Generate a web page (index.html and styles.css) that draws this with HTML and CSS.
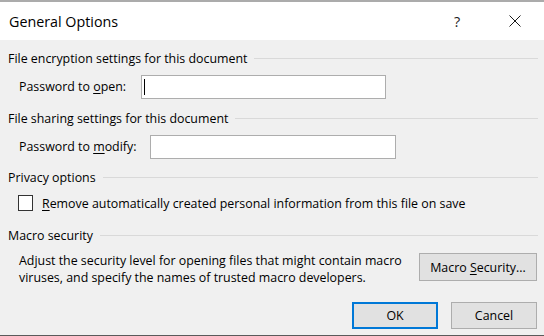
FILE: index.html
```html
<!DOCTYPE html>
<html>
<head>
<meta charset="utf-8">
<link rel="stylesheet" href="styles.css">
</head>
<body>
<div class="dialog">
  <div class="titlebar">
    <div class="title">General Options</div>
    <div class="help">?</div>
    <div class="close">
      <svg width="12" height="12" viewBox="0 0 12 12"><path d="M0.5 0.5 L11.5 11.5 M11.5 0.5 L0.5 11.5" stroke="#1a1a1a" stroke-width="1" fill="none"/></svg>
    </div>
  </div>
  <div class="content">
    <div class="group-head g1"><span>File encryption settings for this document</span></div>
    <div class="field-row r1">
      <label class="label w-open">Password to <u>o</u>pen:</label>
      <div class="input focused"><span class="caret"></span></div>
    </div>
    <div class="group-head g2"><span>File sharing settings for this document</span></div>
    <div class="field-row r2">
      <label class="label w-modify">Password to <u>m</u>odify:</label>
      <div class="input"></div>
    </div>
    <div class="group-head g3"><span>Privacy options</span></div>
    <div class="check-row">
      <span class="checkbox"></span>
      <span class="check-label"><u>R</u>emove automatically created personal information from this file on save</span>
    </div>
    <div class="group-head g4"><span>Macro security</span></div>
    <div class="macro-row">
      <div class="desc">Adjust the security level for opening files that might contain macro<br>viruses, and specify the names of trusted macro developers.</div>
      <button class="btn macro-btn">Macro <u>S</u>ecurity...</button>
    </div>
    <div class="footer">
      <button class="btn ok">OK</button>
      <button class="btn cancel">Cancel</button>
    </div>
  </div>
</div>
</body>
</html>
```
FILE: styles.css
```css
html, body {
  margin: 0;
  padding: 0;
}
body {
  width: 544px;
  height: 336px;
  overflow: hidden;
  background: #f0f0f0;
  font-family: "Open Sans", "Noto Sans", sans-serif;
  font-size: 12.4px;
  color: #000;
}
.dialog {
  width: 544px;
  height: 336px;
  box-sizing: border-box;
  border-bottom: 1px solid #5a5a5a;
  display: flex;
  flex-direction: column;
}
.titlebar {
  height: 38px;
  border-top: 2px solid #ababab;
  background: #fff;
  display: flex;
  align-items: center;
}
.title {
  padding-left: 9px;
  font-size: 14.3px;
  flex: 1;
  color: #000;
}
.help {
  font-size: 14.3px;
  width: 8px;
  margin-right: 47px;
  color: #1a1a1a;
}
.close {
  width: 12px;
  height: 12px;
  margin-right: 23px;
  display: flex;
}
.content {
  padding: 11px 6px 0 8px;
  display: flex;
  flex-direction: column;
}
.group-head {
  display: flex;
  align-items: center;
  height: 16px;
  line-height: 16px;
}
.group-head::after {
  content: "";
  flex: 1;
  height: 1px;
  background: #d9d9d9;
  margin-left: 7px;
  margin-top: -2px;
}
.g2 { margin-top: 12px; }
.g3 { margin-top: 11px; }
.g4 { margin-top: 17px; }
.field-row {
  display: flex;
  align-items: center;
  margin-top: 8px;
  padding-left: 11px;
  height: 24px;
}
.label {
  line-height: 16px;
}
.w-open { width: 122px; }
.w-modify { width: 131px; }
.input {
  width: 243px;
  height: 22px;
  border: 1px solid #adadad;
  background: #fff;
  position: relative;
}
.r2 .input { width: 244px; }
.caret {
  position: absolute;
  left: 2px;
  top: 3px;
  width: 1px;
  height: 16px;
  background: #000;
}
.check-row {
  display: flex;
  align-items: center;
  margin-top: 9px;
  padding-left: 10px;
  height: 16px;
}
.checkbox {
  width: 13px;
  height: 14px;
  border: 1px solid #333;
  background: #fff;
  margin-right: 9px;
}
.macro-row {
  display: flex;
  align-items: flex-start;
  margin-top: 8px;
  padding-left: 11px;
}
.desc {
  flex: 1;
  line-height: 17px;
}
.btn {
  font-family: inherit;
  font-size: 12.4px;
  color: #000;
  background: #e1e1e1;
  border: 1px solid #adadad;
  padding: 0;
  margin: 0;
  box-sizing: border-box;
}
.macro-btn {
  width: 118px;
  height: 28px;
  margin-top: 1px;
  margin-right: 1px;
}
.footer {
  display: flex;
  justify-content: flex-end;
  gap: 13px;
  margin-top: 16px;
  padding-right: 1px;
}
.ok, .cancel {
  width: 86px;
  height: 27px;
}
.ok {
  border: 2px solid #0078d7;
}
u {
  text-decoration: underline;
  text-underline-offset: 2px;
}
```
